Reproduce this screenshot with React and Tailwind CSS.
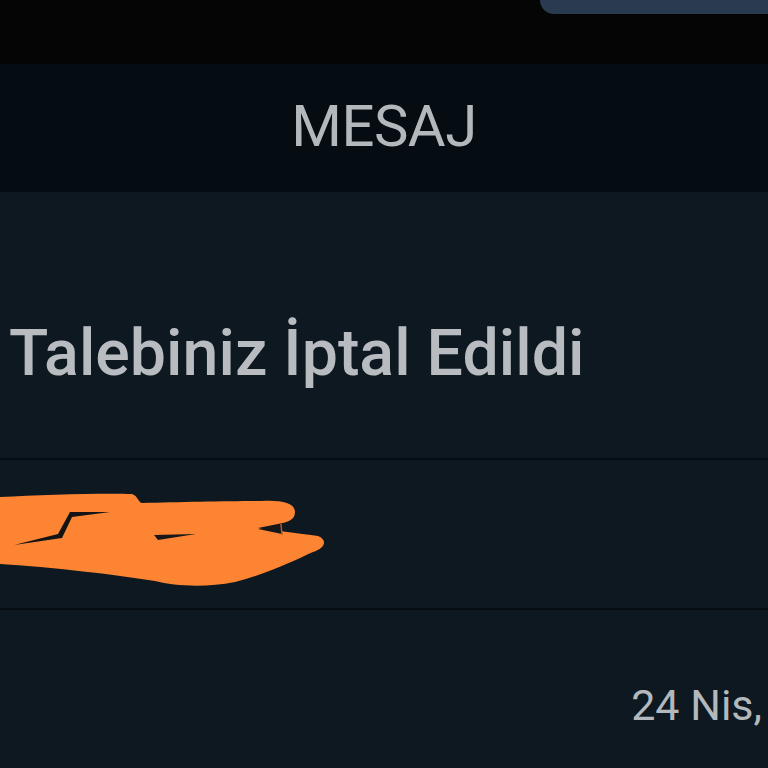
export default function App() {
  return (
    <div className="w-[768px] h-[768px] overflow-hidden bg-[#0d1821] flex flex-col" style={{ fontFamily: 'Roboto, "Liberation Sans", sans-serif' }}>
      {/* top status strip */}
      <div className="h-16 bg-[#050505] flex justify-end shrink-0">
        <div className="w-[228px] h-[14px] bg-[#2a3a4f] rounded-bl-[14px]" />
      </div>

      {/* header */}
      <div className="h-32 bg-[#050d13] flex items-center justify-center shrink-0">
        <span className="text-[58px] leading-none text-[#b3b8bd] tracking-[-0.5px] -mt-[4px]">MESAJ</span>
      </div>

      {/* subject */}
      <div className="h-[268px] flex items-center pl-[9px] shrink-0 border-b-2 border-[#070d12]">
        <span className="text-[64.5px] font-medium leading-none text-[#b8bcc1] whitespace-nowrap pt-[56px]">Talebiniz İptal Edildi</span>
      </div>

      {/* redacted line */}
      <div className="h-[150px] shrink-0 border-b-2 border-[#070d12]">
        <svg width="768" height="148" viewBox="0 462 768 148" className="block">
          <path
            d="M0 499 C40 497 100 495 132 496 C138 498 138 504 142 505 C180 504 230 503 262 503 C282 502 295 505 295 514 C295 522 288 524 278 526 L258 530 C285 534 305 536 318 538 C328 542 325 550 313 554 C295 562 270 575 235 584 C205 590 175 588 155 583 C110 576 60 570 0 566 Z"
            fill="#fd8432"
          />
          <path d="M70 514 L110 514 L72 519 L62 540 L14 547 L58 536 Z" fill="#141414" />
          <path d="M154 537 L196 536 L158 542 Z" fill="#181818" />
          <path d="M258 531 L282 526 L282 536 Z" fill="#14181c" />
          <path d="M281 526 L282 537" stroke="#c0541e" strokeWidth="1.5" />
        </svg>
      </div>

      {/* date */}
      <div className="flex-1 flex justify-end items-start pt-[74px] pr-[6px] overflow-hidden">
        <span className="text-[43px] leading-none text-[#b3b8bd] whitespace-nowrap">24 Nis,</span>
      </div>
    </div>
  );
}
